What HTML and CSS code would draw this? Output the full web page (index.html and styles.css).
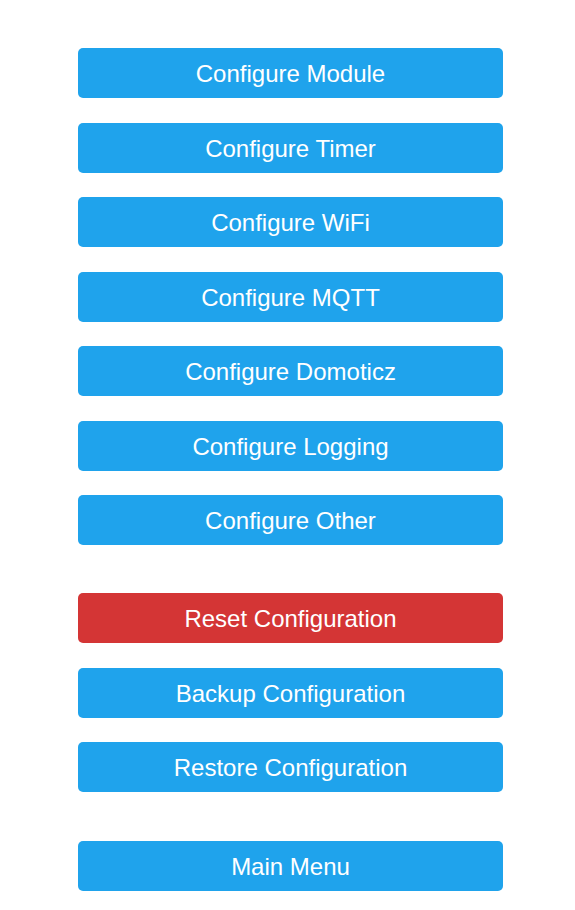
FILE: index.html
```html
<!DOCTYPE html>
<html>
<head>
<meta charset="utf-8">
<link rel="stylesheet" href="styles.css">
</head>
<body>
<div class="menu">
  <div class="group">
    <button class="btn">Configure Module</button>
    <button class="btn">Configure Timer</button>
    <button class="btn">Configure WiFi</button>
    <button class="btn">Configure MQTT</button>
    <button class="btn">Configure Domoticz</button>
    <button class="btn">Configure Logging</button>
    <button class="btn">Configure Other</button>
  </div>
  <div class="group">
    <button class="btn btn-red">Reset Configuration</button>
    <button class="btn">Backup Configuration</button>
    <button class="btn">Restore Configuration</button>
  </div>
  <div class="group group-last">
    <button class="btn">Main Menu</button>
  </div>
</div>
</body>
</html>
```
FILE: styles.css
```css
html, body {
  margin: 0;
  padding: 0;
  background: #ffffff;
}
.menu {
  width: 425px;
  margin-left: 78px;
  padding-top: 48px;
  display: flex;
  flex-direction: column;
  gap: 48px;
}
.group {
  display: flex;
  flex-direction: column;
  gap: 24.5px;
}
.group-last {
  margin-top: 1px;
}
.btn {
  display: block;
  width: 100%;
  height: 50px;
  border: 0;
  border-radius: 5px;
  background: #1fa3ec;
  color: #ffffff;
  font-family: "Liberation Sans", Arial, sans-serif;
  font-size: 24px;
  line-height: 50px;
  padding: 1px 0 0 0;
  text-align: center;
}
.btn-red {
  background: #d43535;
}
```
